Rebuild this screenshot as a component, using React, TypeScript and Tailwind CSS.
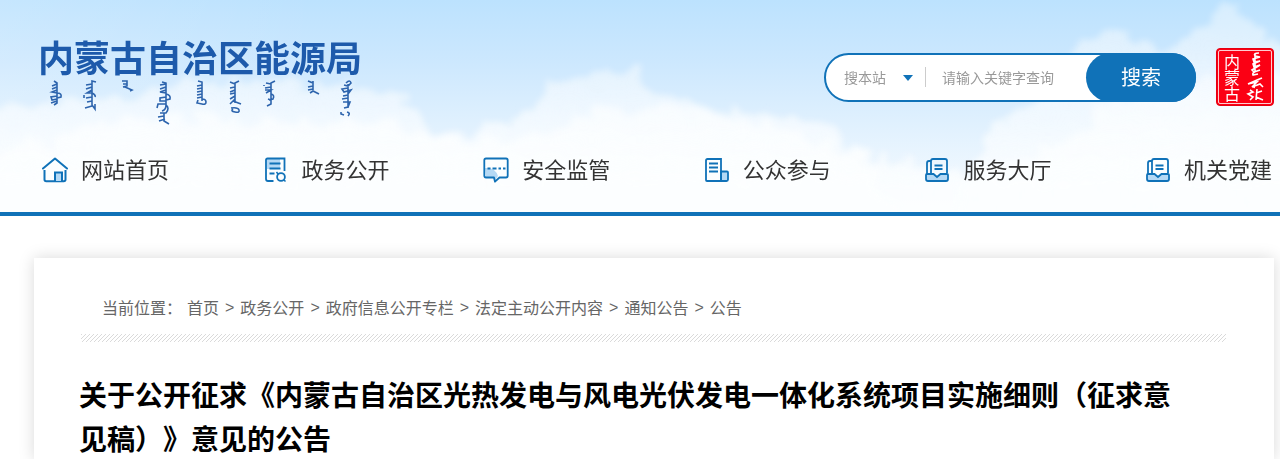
import { ReactNode } from "react";

type NavItem = {
  label: string;
  icon: ReactNode;
};

const HomeIcon = () => (
  <svg width="26" height="26" viewBox="0 0 26 26" fill="none" stroke="#1072b8" strokeWidth="2">
    <path d="M1 11.5 13 1.5l12 10" strokeLinecap="round" strokeLinejoin="round" />
    <path d="M2.5 13v9.5q0 1.8 1.8 1.8h17.4q1.8 0 1.8-1.8V13" />
    <path d="M13 24v-8.500h7V24" fill="#b5d9f5" />
  </svg>
);

const DocumentIcon = () => (
  <svg width="26" height="26" viewBox="0 0 26 26" fill="none" stroke="#1072b8" strokeWidth="1.8">
    <path d="M4 2h13v10H4z" fill="#b5d9f5" stroke="none" />
    <path d="M10.5 24H5q-2 0-2-2V3q0-1.5 1.5-1.5h17V14" />
    <path d="M6.5 6.5h11M6.5 11.5h11M6.5 16.5h5" />
    <circle cx="18" cy="20" r="3.900" />
    <path d="m15 17-1.5-2M21 23l1.500 1.500" strokeWidth="1.5" />
  </svg>
);

const ChatIcon = () => (
  <svg width="26" height="26" viewBox="0 0 26 26" fill="none" stroke="#1072b8" strokeWidth="1.8">
    <path d="M2 11q10-1 13 8l-3 4-2-2H3z" fill="#b5d9f5" stroke="none" />
    <path
      d="M3 1.5h20q1.7 0 1.7 1.7v15.600q0 1.700-1.700 1.700h-6.500L12 24.700 11 20.500H3q-1.700 0-1.700-1.700V3.200q0-1.700 1.700-1.700Z"
      strokeLinejoin="round"
    />
    <path d="M4.5 11.5h3M9.5 11.5h4M15.5 11.5h2.500M20 11.5h2.500" />
  </svg>
);

const BuildingIcon = () => (
  <svg width="26" height="26" viewBox="0 0 26 26" fill="none" stroke="#1072b8" strokeWidth="1.8">
    <path d="M17 14.5h6q1 0 1 1v7q0 1.500-1.500 1.500H17z" fill="#b5d9f5" />
    <path d="M3.5 2H17v22H3q-1 0-1-1V3.500Q2 2 3.500 2Z" />
    <path d="M5 6.5h9M5 10.5h9M5 14.5h9" />
  </svg>
);

const TrayIcon = () => (
  <svg width="26" height="26" viewBox="0 0 26 26" fill="none" stroke="#1072b8" strokeWidth="1.8">
    <path d="M7 16V4q0-2 2-2h12q2 0 2 2v12" />
    <path d="M3 17V6q0-2 2-2h2" />
    <path
      d="M3 17h6.500l3.500 3 3.500-3H23q1 0 1 1v4q0 2-2 2H4q-2 0-2-2v-4q0-1 1-1Z"
      fill="#b5d9f5"
    />
    <path d="M10.5 8.5h8M10.5 12h8" />
  </svg>
);

const navItems: NavItem[] = [
  { label: "网站首页", icon: <HomeIcon /> },
  { label: "政务公开", icon: <DocumentIcon /> },
  { label: "安全监管", icon: <ChatIcon /> },
  { label: "公众参与", icon: <BuildingIcon /> },
  { label: "服务大厅", icon: <TrayIcon /> },
  { label: "机关党建", icon: <TrayIcon /> },
];

const crumbs = [
  "首页",
  "政务公开",
  "政府信息公开专栏",
  "法定主动公开内容",
  "通知公告",
  "公告",
];

// Brush strokes under the site name, one path per vertical word
const scriptStrokes = [
  "M54 81l3 2v20l-3 2M57 84l-5 2M57 87l-5 2M57 90l-5 2 5 1M57 93q5 0 4 4l-4 1M57 96l-6 1 1 3 5-1M57 101l-6 2",
  "M96 82l-4-1v24l3 4v-5M92 84l-6 1M92 87l-6 2M92 90l-5 3h5q4 2 3 4M92 97l-6 1M92 101l-5 1M84 95v3M92 106l-7 2",
  "M122 81h5v5l-4 1M123 84h4M125 87l7 3-2 1",
  "M162 82l4 1v22q0 5-4 6M166 84l-6 1M166 87l-6 2M166 90l-6 2 6 1M166 94q5 1 4 5l-4 1M166 97l-6 1v3h6M166 104l-8 0-1 4M166 105q4 3 0 8h-6M164 113v8l5 3M164 116l-6 1M165 119l-6 2",
  "M198 81l4 1v19M202 85l-5 1M202 88l-5 1M202 91l-5 1M202 94l-5 1M202 97l-5 1M202 99q4 0 4 3t-4 2l-5-1 1-3",
  "M239 81l-4 2v20M235 84l-5-2M235 87l-5 1M235 90l-5 2M235 93l-5 1M235 96l-5 3M235 99l-5 5M233 101l8 3M231 108q7-1 8 2t-4 2-2-3",
  "M275 81l-4 2v16M271 84l-5-1M271 87l-6 1M265 90h6l-5 3M271 94q4 1 2 5l-4 1M268 99l3 1v4l-4 2M264 85v1",
  "M313 81v9M313 83l-5-2M313 86l-5 1M313 89l-5 1M310 93l3-2 6 3",
  "M346 83q4-4 5 0l-3 3-4-1M348 84v24M348 88l-6 1 2 3 7-2-3 4M348 95l-5 1M348 98l-6 1M343 102h7l-2 5-4 1M341 112v2l3 1M347 112q4 1 1 4",
];

function SkyBackground() {
  return (
    <svg
      className="absolute inset-0 -z-10 h-full w-full"
      viewBox="0 0 1280 212"
      preserveAspectRatio="none"
      aria-hidden="true"
    >
      <defs>
        <linearGradient id="sky" x1="0" y1="0" x2="0" y2="1">
          <stop offset="0" stopColor="#bce2fe" />
          <stop offset="0.3" stopColor="#cde8fe" />
          <stop offset="0.6" stopColor="#e1f1fe" />
          <stop offset="1" stopColor="#fafdff" />
        </linearGradient>
        <linearGradient id="leftGlow">
          <stop offset="0" stopColor="#fff" stopOpacity="0.15" />
          <stop offset="0.25" stopColor="#fff" stopOpacity="0" />
        </linearGradient>
        <linearGradient id="cloud" x1="0" y1="0" x2="0" y2="1">
          <stop offset="0" stopColor="#fff" stopOpacity="0.55" />
          <stop offset="0.7" stopColor="#fcfeff" />
        </linearGradient>
        <filter
          id="puff"
          x="-5%"
          y="-20%"
          width="110%"
          height="140%"
          colorInterpolationFilters="sRGB"
        >
          <feTurbulence type="fractalNoise" baseFrequency="0.05" numOctaves="4" seed="8" />
          <feDisplacementMap in="SourceGraphic" scale="34" xChannelSelector="R" yChannelSelector="G" />
          <feGaussianBlur stdDeviation="3" />
        </filter>
      </defs>
      <rect width="1280" height="212" fill="url(#sky)" />
      <rect width="1280" height="212" fill="url(#leftGlow)" />
      <g filter="url(#puff)" fill="url(#cloud)">
        <path
          d="M-20 110Q60 102 140 94Q190 78 250 80T370 84Q420 98 435 135L480 130Q530 118 550 88Q590 66 635 70Q645 94 700 104T790 116Q840 124 860 156T900 230H-20Z"
          opacity="0.8"
        />
        <path
          d="M980 150Q1000 105 1040 98T1055 62Q1080 32 1110 30L1160 48Q1200 40 1210 20T1240 10Q1245 40 1300 50V230H950Z"
          opacity="0.7"
        />
        <path
          d="M-20 165Q90 110 190 118T400 122Q480 160 560 124T780 128Q860 165 960 168T1090 110Q1180 70 1300 80V230H-20Z"
          opacity="0.8"
        />
      </g>
    </svg>
  );
}

function Logo() {
  return (
    <a href="#" className="block">
      <span className="block text-[36px] leading-8 font-bold text-[#1d5aab]">
        内蒙古自治区能源局
      </span>
      <svg
        className="mt-2"
        width="330"
        height="46"
        viewBox="38 80 330 46"
        fill="none"
        stroke="#2d64ad"
        strokeWidth="1.6"
        aria-hidden="true"
      >
        {scriptStrokes.map((d, index) => (
          <path key={index} d={d} />
        ))}
      </svg>
    </a>
  );
}

function SearchForm() {
  return (
    <form
      className="flex h-[49px] w-[372px] items-center rounded-full border-2 border-[#1072b8] bg-white pl-[18px] text-sm text-[#999]"
      onSubmit={(e) => e.preventDefault()}
    >
      <div className="relative w-[82px] border-r border-[#ccc]">
        <select
          aria-label="搜索范围"
          className="block h-5 w-full appearance-none leading-5 outline-none"
        >
          <option>搜本站</option>
        </select>
        <svg
          className="pointer-events-none absolute top-2 right-3"
          width="10"
          height="6"
          viewBox="0 0 10 6"
          fill="#1072b8"
        >
          <path d="M0 0h10L5 6Z" />
        </svg>
      </div>
      <input
        type="text"
        aria-label="关键字"
        placeholder="请输入关键字查询"
        className="min-w-0 flex-1 pl-4 outline-none placeholder:text-[#999]"
      />
      <button
        type="submit"
        className="-my-0.5 -mr-0.5 h-[49px] w-[110px] rounded-full bg-[#1072b8] text-xl text-white"
      >
        搜索
      </button>
    </form>
  );
}

function Seal() {
  return (
    <div className="flex size-[58px] items-center justify-around rounded-sm border border-[#e60012] bg-[#fb0014] px-1 text-white outline-1 -outline-offset-3 outline-white/80">
      <span className="w-4 text-center text-base leading-4">内蒙古</span>
      <svg width="20" height="52" viewBox="0 0 20 52" fill="none" stroke="#fff" strokeWidth="1.6" aria-hidden="true">
        <path d="M13 2q-6 0-4 3l5 1-7 2 1 3 6-1-7 3 1 3 6-2-8 5 2 2 6-2M9 3v18M9 21q-3 1-2 3l5-1" />
        <path d="M16 27l-5 2-9 4 9-2-5 5 8-3 3 3M9 31l-1 6M4 39l3 2-5 2 5 3-3 3M11 38l-1 11M10 42l6-2M10 46l7 3" />
      </svg>
    </div>
  );
}

export default function App() {
  return (
    <div className="min-h-screen bg-white font-['Noto_Sans_CJK_SC',sans-serif]">
      <header className="relative isolate border-b-4 border-[#1072b8]">
        <SkyBackground />
        <div className="flex items-start justify-between pt-10 pr-1.5 pl-[38px]">
          <Logo />
          <div className="flex items-center gap-5 pt-2">
            <SearchForm />
            <Seal />
          </div>
        </div>
        <nav className="flex justify-between pt-7 pr-2 pb-[26px] pl-[42px]">
          {navItems.map((item) => (
            <a
              key={item.label}
              href="#"
              className="flex h-8 items-center gap-[13px] text-[22px] text-[#333]"
            >
              {item.icon}
              <span className="pb-1 leading-8">{item.label}</span>
            </a>
          ))}
        </nav>
      </header>

      <main className="mt-[42px] mr-1.5 ml-[34px] px-[45px] pt-[34px] shadow-[0_0_15px_rgba(0,0,0,0.15)]">
        <div className="flex items-start pl-[23px] text-base leading-[30px] text-[#666]">
          <span className="w-[85px]">当前位置：</span>
          {crumbs.map((crumb, index) => (
            <div key={crumb} className="flex">
              {index > 0 && (
                <span className="px-1.5 font-['Liberation_Sans',sans-serif] leading-8">&gt;</span>
              )}
              <a href="#">{crumb}</a>
            </div>
          ))}
        </div>
        <div className="mt-2.5 mr-[3px] ml-0.5 h-2 bg-[linear-gradient(135deg,#dadada_19%,transparent_19%,transparent_56%,#dadada_56%,#dadada_69%,transparent_69%)] bg-[length:4px_4px]" />
        <h1 className="mt-[30px] pr-8 text-[28px] leading-[44px] font-bold text-black [text-spacing-trim:space-all]">
          关于公开征求《内蒙古自治区光热发电与风电光伏发电一体化系统项目实施细则（征求意见稿）》意见的公告
        </h1>
      </main>
    </div>
  );
}
